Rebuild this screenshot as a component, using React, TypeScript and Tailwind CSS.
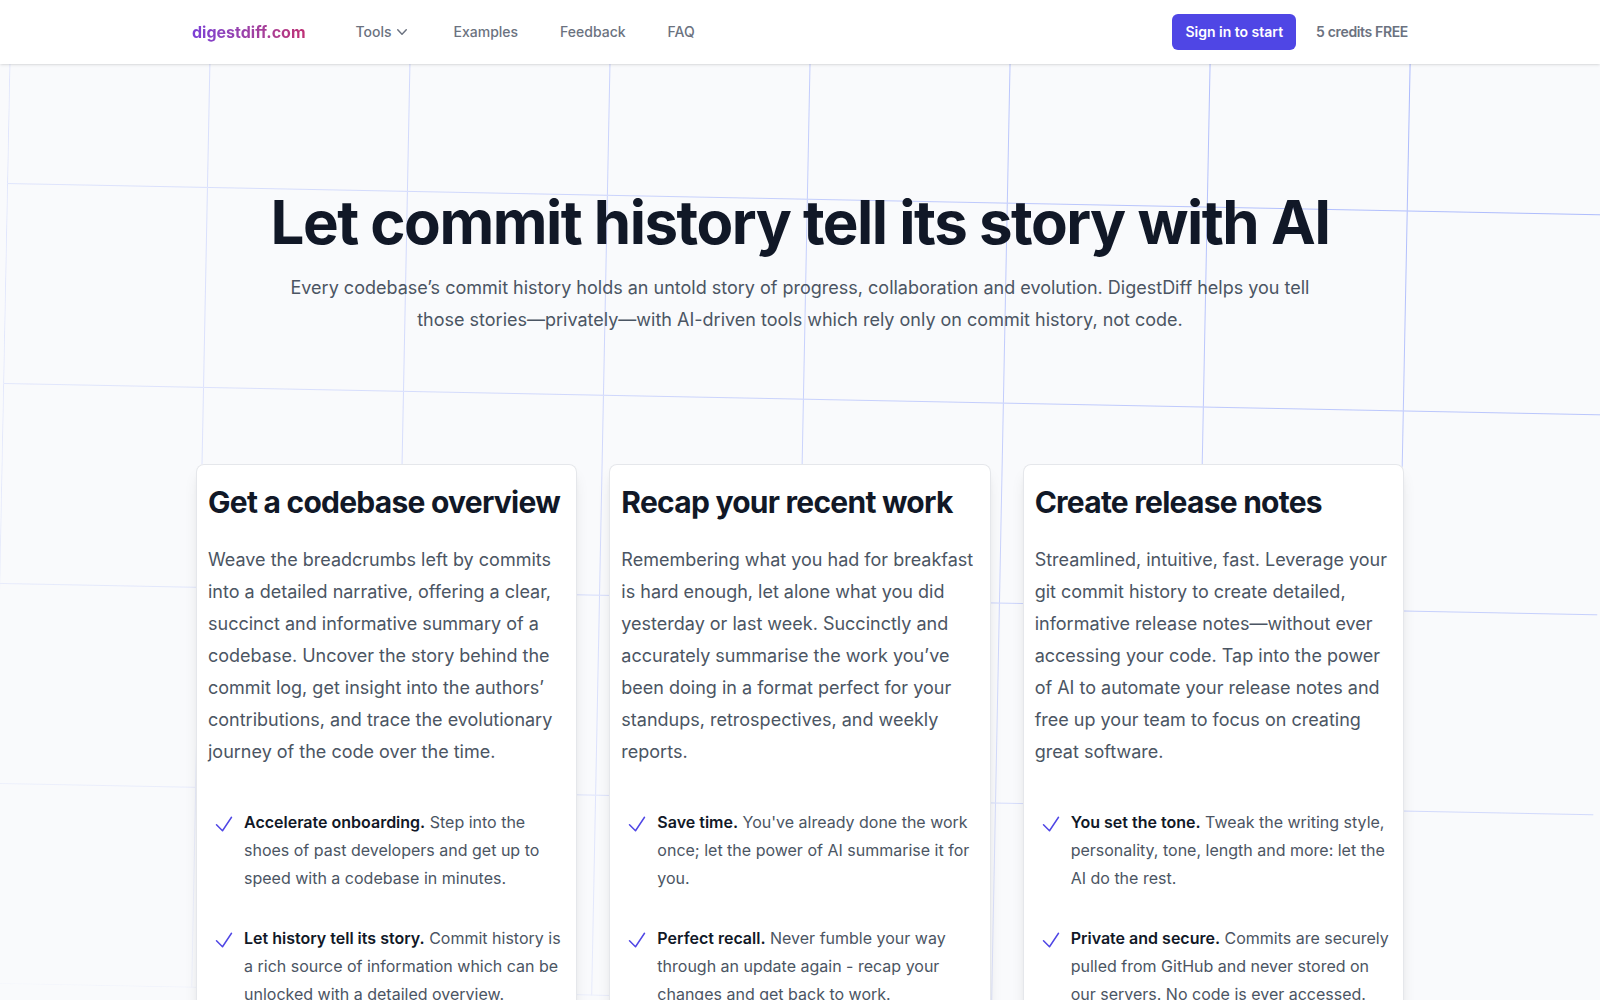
import { ReactNode } from 'react';

interface Benefit {
  title: string;
  text: string;
}

interface Feature {
  title: string;
  description: string;
  benefits: Benefit[];
}

const features: Feature[] = [
  {
    title: 'Get a codebase overview',
    description:
      'Weave the breadcrumbs left by commits into a detailed narrative, offering a clear, succinct and informative summary of a codebase. Uncover the story behind the commit log, get insight into the authors’ contributions, and trace the evolutionary journey of the code over the time.',
    benefits: [
      {
        title: 'Accelerate onboarding.',
        text: 'Step into the shoes of past developers and get up to speed with a codebase in minutes.',
      },
      {
        title: 'Let history tell its story.',
        text: 'Commit history is a rich source of information which can be unlocked with a detailed overview.',
      },
    ],
  },
  {
    title: 'Recap your recent work',
    description:
      'Remembering what you had for breakfast is hard enough, let alone what you did yesterday or last week. Succinctly and accurately summarise the work you’ve been doing in a format perfect for your standups, retrospectives, and weekly reports.',
    benefits: [
      {
        title: 'Save time.',
        text: "You've already done the work once; let the power of AI summarise it for you.",
      },
      {
        title: 'Perfect recall.',
        text: 'Never fumble your way through an update again - recap your changes and get back to work.',
      },
    ],
  },
  {
    title: 'Create release notes',
    description:
      'Streamlined, intuitive, fast. Leverage your git commit history to create detailed, informative release notes—without ever accessing your code. Tap into the power of AI to automate your release notes and free up your team to focus on creating great software.',
    benefits: [
      {
        title: 'You set the tone.',
        text: 'Tweak the writing style, personality, tone, length and more: let the AI do the rest.',
      },
      {
        title: 'Private and secure.',
        text: 'Commits are securely pulled from GitHub and never stored on our servers. No code is ever accessed.',
      },
    ],
  },
];

function NavLink({ children }: { children: ReactNode }) {
  return (
    <a href="#" className="text-sm font-medium text-[#6b7280] hover:text-[#111827]">
      {children}
    </a>
  );
}

function Header() {
  return (
    <header className="relative z-10 bg-white shadow-sm">
      <div className="mx-auto flex h-16 max-w-7xl items-center justify-between px-8">
        <div className="flex items-center gap-[50px]">
          <a
            href="#"
            className="bg-gradient-to-r from-[#7c3fd6] to-[#be3075] bg-clip-text font-bold text-transparent"
          >
            digestdiff.com
          </a>
          <nav className="flex items-center gap-[42px]">
            <button
              type="button"
              className="flex items-center text-sm font-medium text-[#6b7280] hover:text-[#111827]"
            >
              Tools
              <svg viewBox="0 0 20 20" fill="currentColor" className="size-5" aria-hidden="true">
                <path
                  fillRule="evenodd"
                  clipRule="evenodd"
                  d="M5.23 7.21a.75.75 0 011.06.02L10 11.168l3.71-3.938a.75.75 0 111.08 1.04l-4.25 4.5a.75.75 0 01-1.08 0l-4.25-4.5a.75.75 0 01.02-1.06z"
                />
              </svg>
            </button>
            <NavLink>Examples</NavLink>
            <NavLink>Feedback</NavLink>
            <NavLink>FAQ</NavLink>
          </nav>
        </div>
        <div className="flex items-center gap-5">
          <button
            type="button"
            className="rounded-md bg-[#4f46e5] px-[13px] py-2 text-sm font-semibold text-white hover:bg-[#6366f1]"
          >
            Sign in to start
          </button>
          <span className="text-sm font-semibold tracking-tight text-[#6b7280]">
            5 credits FREE
          </span>
        </div>
      </div>
    </header>
  );
}

function GridBackdrop() {
  return (
    <svg
      className="absolute inset-x-0 top-0 h-[1000px] w-full stroke-[#a5b4fc] [mask-image:radial-gradient(farthest-corner_at_top_right,white,transparent)]"
      aria-hidden="true"
    >
      <defs>
        <pattern id="hero-grid" width="200" height="200" patternUnits="userSpaceOnUse">
          <path d="M.5 200V.5H200" fill="none" />
        </pattern>
      </defs>
      <g transform="translate(7 119) rotate(1.125)">
        <rect y="-200" width="99.9%" height="1001" strokeWidth="0" fill="url(#hero-grid)" />
      </g>
    </svg>
  );
}

function CheckIcon() {
  return (
    <svg
      viewBox="0 0 24 24"
      fill="none"
      stroke="currentColor"
      strokeWidth="1.5"
      strokeLinecap="round"
      strokeLinejoin="round"
      className="absolute left-1 top-1 size-6 text-[#4f46e5]"
      aria-hidden="true"
    >
      <path d="M4.5 12.75l6 6 9-13.5" />
    </svg>
  );
}

function FeatureCard({ feature }: { feature: Feature }) {
  return (
    <article className="rounded-lg bg-white px-3 pb-12 pt-5 shadow-lg ring-1 ring-inset ring-gray-200">
      <h2 className="text-3xl font-bold tracking-tight text-[#111827]">{feature.title}</h2>
      <p className="mt-6 text-lg leading-8 text-[#4b5563]">{feature.description}</p>
      <ul className="mt-10 space-y-8 text-base leading-7 text-[#4b5563]">
        {feature.benefits.map((benefit) => (
          <li key={benefit.title} className="relative pl-9">
            <CheckIcon />
            <strong className="font-semibold text-[#111827]">{benefit.title}</strong> {benefit.text}
          </li>
        ))}
      </ul>
    </article>
  );
}

export default function App() {
  return (
    <div className="min-h-screen bg-[#f9fafc] font-['Inter',sans-serif]">
      <Header />
      <main className="relative overflow-hidden">
        <GridBackdrop />
        <div className="relative mx-auto max-w-7xl px-9 py-32">
          <div className="mx-auto max-w-5xl text-center">
            <h1 className="-mx-8 text-6xl font-bold tracking-tight text-[#111827]">
              Let commit history tell its story with AI
            </h1>
            <p className="mt-5 text-lg leading-8 text-[#4b5563]">
              Every codebase’s commit history holds an untold story of progress, collaboration and
              evolution. DigestDiff helps you tell those stories—privately—with AI-driven tools
              which rely only on commit history, not code.
            </p>
          </div>
          <div className="mt-32 grid grid-cols-3 gap-8">
            {features.map((feature) => (
              <FeatureCard key={feature.title} feature={feature} />
            ))}
          </div>
        </div>
      </main>
    </div>
  );
}
